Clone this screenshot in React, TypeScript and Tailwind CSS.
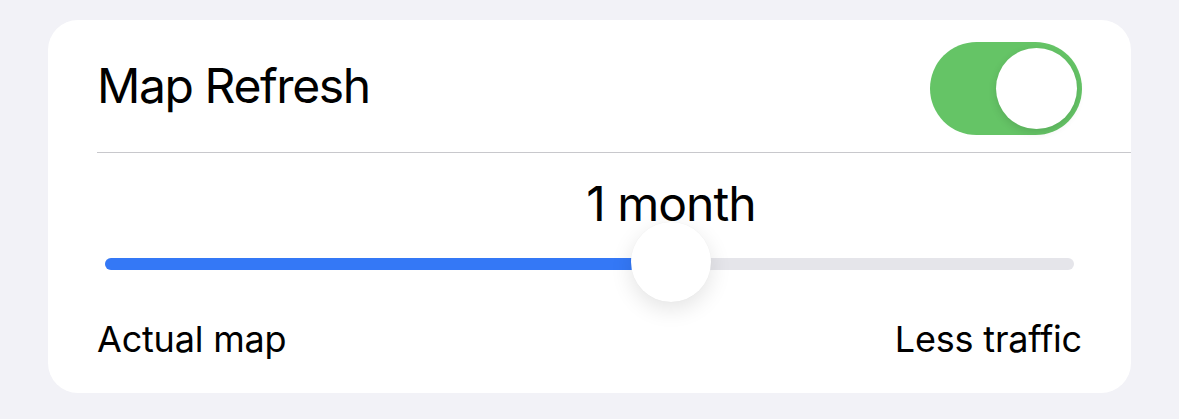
import React from "react";

export default function App() {
  const value = 0.584;

  return (
    <div className="min-h-[419px] w-full bg-[#f2f2f7] pt-[20px] px-[48px] font-['Inter',sans-serif] text-black">
      <div className="rounded-[30px] bg-white h-[373px] overflow-hidden">
        {/* Header row */}
        <div className="h-[132px] flex items-center justify-between pl-[49px] pr-[49px]">
          <span className="text-[48px] leading-[48px] tracking-[-1.4px]">Map Refresh</span>
          <div className="mt-[4px] w-[152px] h-[93px] rounded-full bg-[#65c466] flex items-center justify-end pr-[5px]">
            <div className="w-[81px] h-[81px] rounded-full bg-white shadow-[0_3px_8px_rgba(0,0,0,0.12)]" />
          </div>
        </div>
        <div className="ml-[49px] h-px bg-[#c8c8cc]" />

        {/* Slider section */}
        <div className="px-[57px] pt-[27px]">
          {/* value label follows the thumb */}
          <div className="relative h-[48px]">
            <span
              className="absolute top-0 -translate-x-1/2 whitespace-nowrap text-[48px] leading-[48px] tracking-[-1px]"
              style={{ left: `${value * 100}%` }}
            >
              1 month
            </span>
          </div>
          <div className="relative mt-[30px] h-[12px] rounded-full bg-[#e5e5ea]">
            <div
              className="absolute left-0 top-0 h-[12px] rounded-l-full bg-[#3478f6]"
              style={{ width: `${value * 100}%` }}
            />
            <div
              className="absolute top-[-36px] -ml-[40px] w-[80px] h-[80px] rounded-full bg-white shadow-[0_7px_22px_rgba(0,0,0,0.11),0_0_1px_rgba(0,0,0,0.06)]"
              style={{ left: `${value * 100}%` }}
            />
          </div>
          <div className="mt-[51px] -mx-[8px] flex justify-between text-[36px] leading-[36px] tracking-[-0.2px]">
            <span>Actual map</span>
            <span>Less traffic</span>
          </div>
        </div>
      </div>
    </div>
  );
}
